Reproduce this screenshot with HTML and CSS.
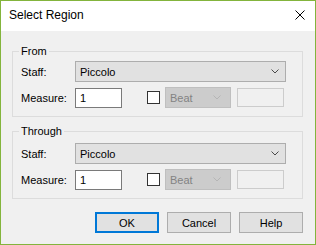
FILE: index.html
```html
<!DOCTYPE html>
<html>
<head>
<meta charset="utf-8">
<link rel="stylesheet" href="styles.css">
</head>
<body>
<div class="window">
  <div class="titlebar">
    <span class="title">Select Region</span>
    <svg class="close" width="10" height="10" viewBox="0 0 10 10"><path d="M0.5 0.5 L9.5 9.5 M9.5 0.5 L0.5 9.5" stroke="#000" stroke-width="1" fill="none"/></svg>
  </div>
  <div class="content">
    <fieldset class="group">
      <legend>From</legend>
      <div class="rows">
        <div class="row">
          <span class="label">Staff:</span>
          <div class="select staff"><span>Piccolo</span><svg width="8" height="5" viewBox="0 0 8 5"><path d="M0.5 0.5 L4 4 L7.5 0.5" stroke="#4a4a4a" fill="none"/></svg></div>
        </div>
        <div class="row">
          <span class="label">Measure:</span>
          <div class="textbox">1</div>
          <div class="check"></div>
          <div class="select beat"><span>Beat</span><svg width="8" height="5" viewBox="0 0 8 5"><path d="M0.5 0.5 L4 4 L7.5 0.5" stroke="#b5b5b5" fill="none"/></svg></div>
          <div class="textbox disabled"></div>
        </div>
      </div>
    </fieldset>
    <fieldset class="group">
      <legend>Through</legend>
      <div class="rows">
        <div class="row">
          <span class="label">Staff:</span>
          <div class="select staff"><span>Piccolo</span><svg width="8" height="5" viewBox="0 0 8 5"><path d="M0.5 0.5 L4 4 L7.5 0.5" stroke="#4a4a4a" fill="none"/></svg></div>
        </div>
        <div class="row">
          <span class="label">Measure:</span>
          <div class="textbox">1</div>
          <div class="check"></div>
          <div class="select beat"><span>Beat</span><svg width="8" height="5" viewBox="0 0 8 5"><path d="M0.5 0.5 L4 4 L7.5 0.5" stroke="#b5b5b5" fill="none"/></svg></div>
          <div class="textbox disabled"></div>
        </div>
      </div>
    </fieldset>
    <div class="buttons">
      <button class="btn default">OK</button>
      <button class="btn">Cancel</button>
      <button class="btn">Help</button>
    </div>
  </div>
</div>
</body>
</html>
```
FILE: styles.css
```css
* { box-sizing: border-box; }
html, body { margin: 0; padding: 0; }
body {
  font-family: "Liberation Sans", Arial, sans-serif;
  font-size: 11px;
  color: #000;
  background: #f0f0f0;
}
.window {
  width: 316px;
  height: 245px;
  border: 1px solid #83b43c;
  background: #f0f0f0;
  display: flex;
  flex-direction: column;
}
.titlebar {
  height: 30px;
  flex: none;
  background: #fff;
  display: flex;
  align-items: center;
  justify-content: space-between;
  padding: 0 10px 2px 8px;
}
.title { font-size: 12px; }
.close { display: block; }
.content {
  padding: 13px 12px 0 11px;
  display: flex;
  flex-direction: column;
}
.group {
  margin: 0;
  padding: 0 12px 8px 8px;
  border: 1px solid #dcdcdc;
  min-width: 0;
}
.group + .group { margin-top: 7px; }
.group legend {
  padding: 0 2px;
  margin-left: -2px;
  line-height: 15px;
  font-size: 11px;
}
.rows {
  display: flex;
  flex-direction: column;
  gap: 5px;
  padding-top: 2px;
}
.group + .group .rows { padding-top: 4px; }
.row {
  display: flex;
  align-items: center;
  height: 21px;
}
.label { width: 54px; flex: none; }
.select {
  height: 21px;
  display: flex;
  align-items: center;
  justify-content: space-between;
  padding: 0 6px 0 4px;
  background: #e1e1e1;
  border: 1px solid #adadad;
}
.select svg { display: block; }
.staff { width: 211px; }
.beat {
  width: 66px;
  background: #cccccc;
  border-color: #bfbfbf;
  color: #838383;
  margin-left: 5px;
  padding-right: 9px;
}
.textbox {
  width: 47px;
  height: 20px;
  background: #fff;
  border: 1px solid #7a7a7a;
  padding: 0 4px;
  line-height: 18px;
}
.textbox.disabled {
  margin-left: 6px;
  background: #f0f0f0;
  border-color: #cccccc;
  height: 19px;
}
.check {
  width: 13px;
  height: 13px;
  border: 1px solid #333;
  background: #fff;
  margin-left: 25px;
}
.buttons {
  display: flex;
  justify-content: flex-end;
  gap: 8px;
  margin-top: 13px;
}
.btn {
  width: 64px;
  height: 21px;
  font-family: inherit;
  font-size: 11px;
  color: #000;
  background: #e1e1e1;
  border: 1px solid #adadad;
  padding: 0;
  margin: 0;
}
.btn.default { border: 2px solid #0078d7; }
```
